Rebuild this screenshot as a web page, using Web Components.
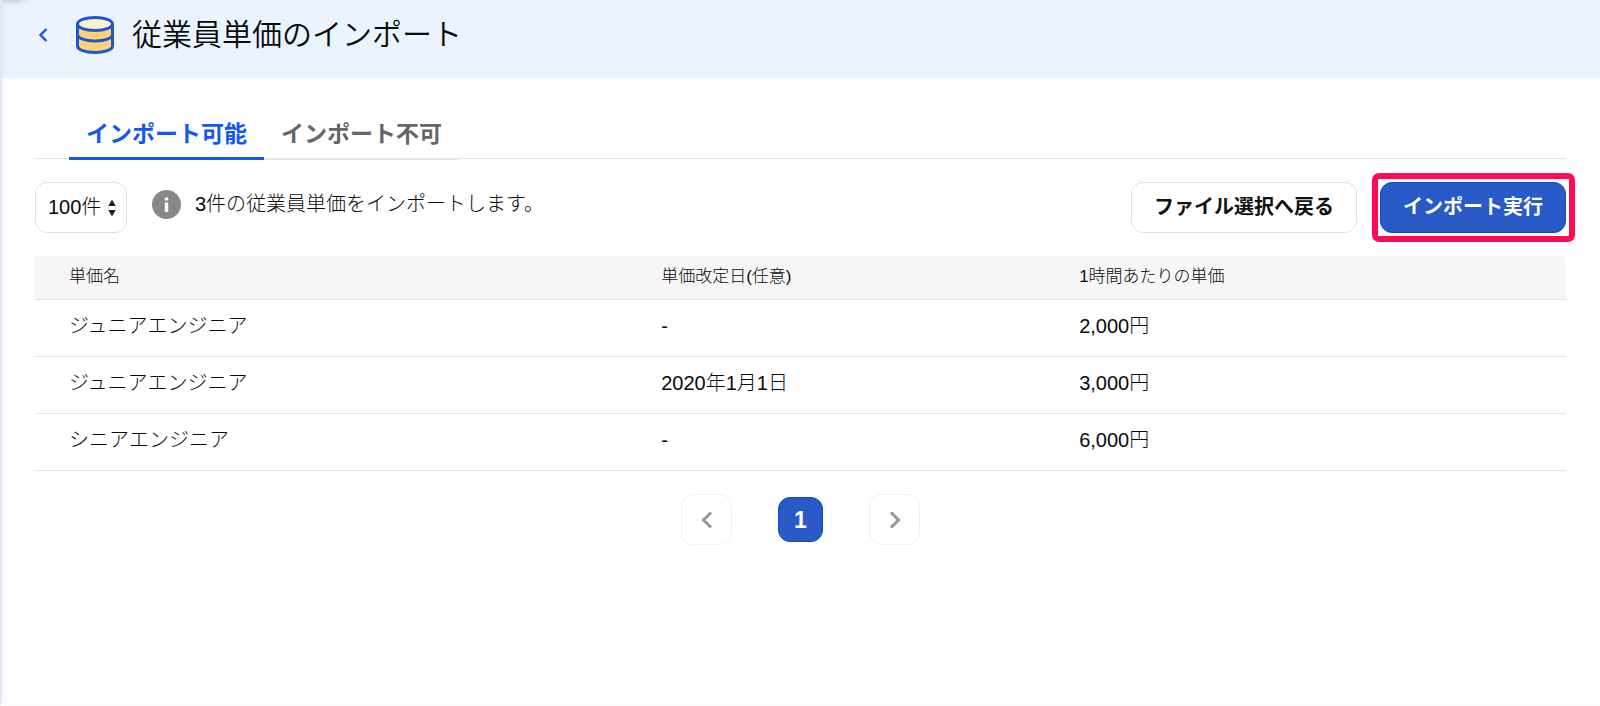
<!DOCTYPE html>
<html lang="ja">
<head>
<meta charset="utf-8">
<title>従業員単価のインポート</title>
<style>
	html, body { height: 100%; }
	body {
		margin: 0;
		background: #fff;
		color: #0a0a0a;
		font: 300 20px/30px "Liberation Sans", "Noto Sans CJK JP", sans-serif;
	}
</style>
</head>
<body>
<import-page>
	<page-header slot="header">従業員単価のインポート</page-header>
	<tab-bar labels="インポート可能,インポート不可"></tab-bar>
	<import-toolbar sizes="100件">3件の従業員単価をインポートします。</import-toolbar>
	<price-table></price-table>
	<page-nav page="1"></page-nav>
</import-page>

<script>
	const define = (name, html, ready) => {
		const template = document.createElement("template");
		template.innerHTML = html;
		customElements.define(
			name,
			class extends HTMLElement {
				constructor() {
					super();
					this.attachShadow({ mode: "open" });
					this.shadowRoot.append(template.content.cloneNode(true));
				}

				connectedCallback() {
					ready && ready(this, this.shadowRoot);
				}
			}
		);
	};

	define("import-page", `
		<style>
			:host {
				box-sizing: border-box;
				display: block;
				min-height: 100%;
				border-left: 2px solid #e1e8fb;
				border-bottom: 3px solid #fcfcfc;
				position: relative;
			}
			/* edge of the side menu */
			:host::before {
				content: "";
				position: absolute;
				inset: 0 auto 0 0;
				width: 6px;
				background: linear-gradient(to right, rgb(0 0 40 / 3%), transparent);
			}
			:host::after {
				content: "";
				position: absolute;
				top: -4px;
				left: 0;
				width: 22px;
				height: 4px;
				box-shadow: 0 0 6px rgb(0 0 40 / 35%);
				clip-path: inset(4px -10px -10px 0);
			}
			main { padding: 36px 34px 36px 33px; }
		</style>
		<slot name="header"></slot>
		<main><slot></slot></main>
	`);

	define("page-header", `
		<style>
			:host {
				display: flex;
				align-items: center;
				height: 78px;
				padding: 0 32px;
				box-sizing: border-box;
				background: #ebf3ff;
			}
			a { display: flex; margin-right: 24px; padding-bottom: 8px; }
			.db { margin-right: 18px; padding-bottom: 8px; }
			h1 { font: inherit; font-size: 30px; font-weight: 350; line-height: 44px; margin: 0; padding-bottom: 8px; }
		</style>
		<a href="#" aria-label="戻る">
			<svg width="18" height="18" viewBox="0 0 18 18" fill="none" stroke="#1b55cf" stroke-width="2.4">
				<path d="M12.500 3 6.500 9l6 6"/>
			</svg>
		</a>
		<svg class="db" width="38" height="38" viewBox="0 0 38 38" stroke="#1d57cb" stroke-width="3">
			<path fill="#ffd27a" d="M1.500 8v22c0 3.800 7.800 6.500 17.500 6.500s17.500-2.700 17.500-6.500V8"/>
			<path fill="none" d="M1.500 18.500c0 3.800 7.800 6.500 17.500 6.500s17.500-2.700 17.500-6.500"/>
			<ellipse fill="#fff0d0" cx="19" cy="8" rx="17.500" ry="6.500"/>
		</svg>
		<h1><slot></slot></h1>
	`);

	define("tab-bar", `
		<style>
			:host {
				display: flex;
				padding-left: 34px;
				background: linear-gradient(#e4e4e4, #e4e4e4) 0 44px / 100% 1px no-repeat;
			}
			button {
				height: 46px;
				padding: 0 17px 4px;
				border: 0;
				border-bottom: 2px solid #e8e8e8;
				background: none;
				color: #666;
				font: bold 23px/30px "Liberation Sans", "Noto Sans CJK JP", sans-serif;
			}
			button[aria-selected=true] {
				padding-bottom: 3px;
				border-bottom: 3px solid #1457f0;
				color: #1457f0;
			}
		</style>
	`, (el, root) => {
		el.setAttribute("role", "tablist");
		const tabs = el.getAttribute("labels").split(",").map((label, i) => {
			const tab = document.createElement("button");
			tab.type = "button";
			tab.textContent = label;
			tab.setAttribute("role", "tab");
			tab.setAttribute("aria-selected", i === 0);
			tab.addEventListener("click", () => {
				tabs.forEach((t) => t.setAttribute("aria-selected", t === tab));
			});
			root.append(tab);
			return tab;
		});
	});

	define("action-button", `
		<style>
			:host { display: block; position: relative; }
			button {
				display: block;
				height: 51px;
				padding: 0 22px 2px;
				border: 1px solid #e0e0e0;
				border-radius: 12px;
				background: #fff;
				color: #111;
				font: bold 20px/30px "Liberation Sans", "Noto Sans CJK JP", sans-serif;
				white-space: nowrap;
			}
			:host([primary]) button {
				border-color: #0c4ac4;
				background: #285ac8;
				color: #fff;
			}
			:host([marked])::after {
				content: "";
				position: absolute;
				inset: -9px -9px -9px -8px;
				border: 6px solid #ff0b55;
				border-radius: 7px;
				pointer-events: none;
			}
		</style>
		<button type="button"><slot></slot></button>
	`);

	define("import-toolbar", `
		<style>
			:host {
				display: flex;
				align-items: center;
				margin: 22px 0 23px;
			}
			.size { display: flex; align-items: center; position: relative; }
			select {
				appearance: none;
				width: 92px;
				height: 51px;
				padding: 0 12px 2px;
				border: 1px solid #e0e0e0;
				border-radius: 12px;
				background: #fff;
				color: inherit;
				font: inherit;
			}
			.arrows { position: absolute; right: 11px; pointer-events: none; }
			.info { flex: none; margin: 0 14px 6px 25px; }
			p { flex: 1; margin: 0; padding-bottom: 7px; }
			action-button + action-button { margin-left: 23px; }
		</style>
		<div class="size">
			<select aria-label="表示件数"></select>
			<svg class="arrows" width="8" height="18" viewBox="0 0 8 18" fill="#222">
				<path d="M4 .5l3.800 6.500H.2zM4 17.500l3.800-6.500H.2z"/>
			</svg>
		</div>
		<svg class="info" width="29" height="29" viewBox="0 0 29 29">
			<circle cx="14.500" cy="14.500" r="14.500" fill="#8a8886"/>
			<path fill="#fff" d="M12.800 7.500h3.400v3h-3.400zM12.800 12.500h3.400v9.500h-3.400z"/>
		</svg>
		<p><slot></slot></p>
		<action-button>ファイル選択へ戻る</action-button>
		<action-button primary marked>インポート実行</action-button>
	`, (el, root) => {
		const select = root.querySelector("select");
		el.getAttribute("sizes").split(",").forEach((size) => select.add(new Option(size)));
	});

	const rows = [
		["ジュニアエンジニア", "-", "2,000円"],
		["ジュニアエンジニア", "2020年1月1日", "3,000円"],
		["シニアエンジニア", "-", "6,000円"]
	];

	define("price-table", `
		<style>
			:host { display: block; }
			table { width: 100%; border-collapse: collapse; table-layout: fixed; }
			th, td {
				padding: 0 0 4px;
				border-bottom: 1px solid #e4e4e4;
				font-weight: inherit;
				text-align: left;
			}
			th { height: 41px; padding-bottom: 2px; background: #f7f5f6; font-size: 17px; }
			td { height: 52px; }
			th:first-child, td:first-child { padding-left: 34px; }
			th:nth-child(1) { width: 40.9%; box-sizing: border-box; }
			th:nth-child(2) { width: 27.3%; }
		</style>
		<table>
			<thead><tr><th>単価名</th><th>単価改定日(任意)</th><th>1時間あたりの単価</th></tr></thead>
			<tbody></tbody>
		</table>
	`, (el, root) => {
		const body = root.querySelector("tbody");
		rows.forEach((row) => {
			const tr = body.insertRow();
			row.forEach((text) => (tr.insertCell().textContent = text));
		});
	});

	define("page-nav", `
		<style>
			:host { display: block; margin-top: 23px; }
			nav { display: flex; align-items: center; justify-content: center; gap: 46px; }
			button {
				display: flex;
				align-items: center;
				justify-content: center;
				width: 51px;
				height: 51px;
				padding: 0;
				border: 1px solid #f0f0f0;
				border-radius: 12px;
				background: #fff;
			}
			.current {
				width: 45px;
				height: 45px;
				border-color: #0c4ac4;
				background: #285ac8;
				color: #fff;
				font: bold 23px/30px "Liberation Sans", sans-serif;
			}
			svg { fill: none; stroke: #969696; stroke-width: 3; }
		</style>
		<nav aria-label="ページ">
			<button type="button" aria-label="前へ"><svg width="18" height="18" viewBox="0 0 18 18"><path d="M13 1.500 5.500 9l7.500 7.500"/></svg></button>
			<button type="button" class="current" aria-current="page"></button>
			<button type="button" aria-label="次へ"><svg width="18" height="18" viewBox="0 0 18 18"><path d="M5 1.500 12.500 9 5 16.500"/></svg></button>
		</nav>
	`, (el, root) => {
		root.querySelector(".current").textContent = el.getAttribute("page");
	});
</script>
</body>
</html>
